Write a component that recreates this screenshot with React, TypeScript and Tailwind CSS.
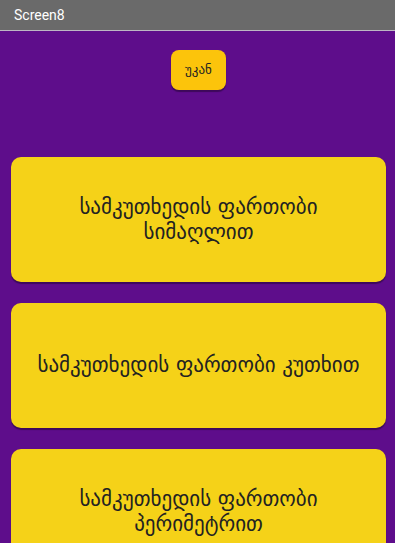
import React from "react";

const geo = { fontFamily: '"DejaVu Sans", "Noto Sans", sans-serif' };

function BigButton({ children }: { children: React.ReactNode }) {
  return (
    <div
      className="ml-[11px] w-[375px] h-[125px] rounded-[10px] bg-[#f5d218] shadow-[0_1.5px_1px_rgba(0,0,0,0.35)] flex items-center justify-center text-center px-4 text-[21px] leading-[25px] text-[#222]"
      style={geo}
    >
      {children}
    </div>
  );
}

export default function App() {
  return (
    <div className="w-[395px] h-[543px] overflow-hidden bg-[#5e0d8b] flex flex-col">
      <div className="h-[31px] bg-[#6a6a6a] border-b border-[#bdb6c4] flex items-center px-[14px] shrink-0">
        <span className="text-white text-[14px]" style={{ fontFamily: "Roboto, sans-serif" }}>
          Screen8
        </span>
      </div>
      <div className="flex justify-center pt-[19px] pl-[2px]">
        <div
          className="w-[55px] h-[40px] rounded-[8px] bg-[#fcc40b] shadow-[0_1.5px_1px_rgba(0,0,0,0.35)] flex items-center justify-center text-[13px] text-[#222]"
          style={geo}
        >
          უკან
        </div>
      </div>
      <div className="flex flex-col gap-[21px] pt-[67px]">
        <BigButton>
          სამკუთხედის ფართობი
          <br />
          სიმაღლით
        </BigButton>
        <BigButton>სამკუთხედის ფართობი კუთხით</BigButton>
        <BigButton>
          სამკუთხედის ფართობი
          <br />
          პერიმეტრით
        </BigButton>
      </div>
    </div>
  );
}
